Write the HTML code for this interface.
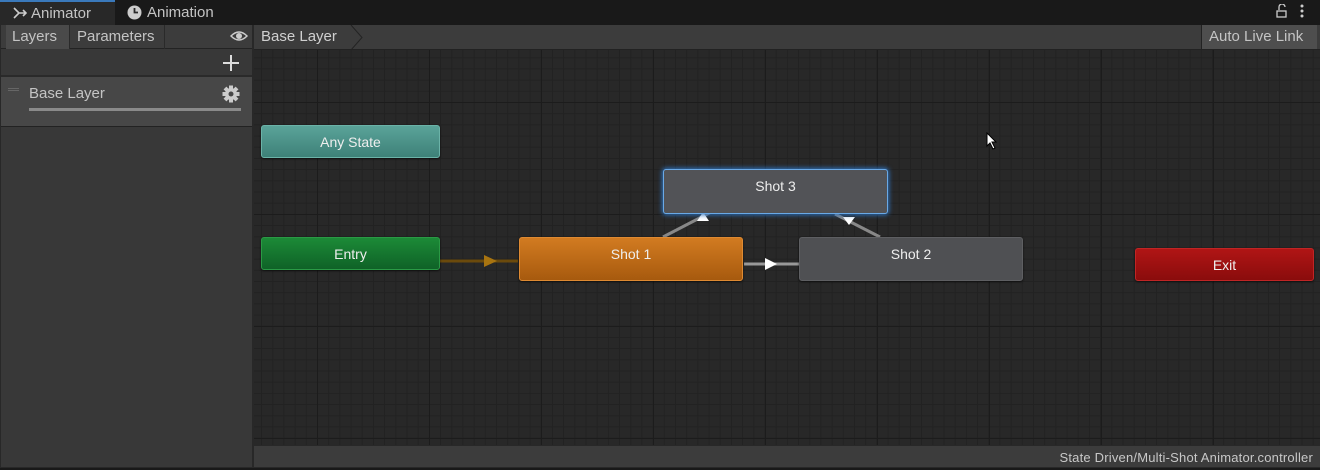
<!DOCTYPE html><html><head><style>
*{margin:0;padding:0;box-sizing:border-box}
body{width:1320px;height:470px;background:#191919;font-family:"Liberation Sans",sans-serif;position:relative;overflow:hidden;color:#c4c4c4}
.a{position:absolute}
.graph{left:254px;top:50px;width:1066px;height:395px;background-color:#282828;
background-image:linear-gradient(90deg,#1c1c1c 1px,transparent 1px),linear-gradient(#1c1c1c 1px,transparent 1px),linear-gradient(90deg,#222 1px,transparent 1px),linear-gradient(#222 1px,transparent 1px);
background-size:112px 112px,112px 112px,11.2px 11.2px,11.2px 11.2px;background-position:63px 52px,63px 52px,63px 52px,63px 52px}
.node{position:absolute;height:33px;border-radius:3px;font-size:14px;display:flex;justify-content:center;padding-top:8px;color:#eee;box-shadow:0 1px 2px rgba(0,0,0,.6)}
</style></head><body>
<div class="a" style="left:0;top:0;width:115px;height:25px;background:#282828;border-top:2px solid #3a79bb;font-size:15px;padding:3px 0 0 31px">Animator</div>
<svg class="a" style="left:13px;top:7px" width="14" height="12"><path d="M1 1 L6 6 L1 11 M6 6 L13 6 M10 3 L13 6 L10 9" fill="none" stroke="#ccc" stroke-width="1.6"/></svg>
<svg class="a" style="left:127px;top:5px" width="15" height="15"><circle cx="7.5" cy="7.5" r="7" fill="#ccc"/><path d="M7.5 3 V7.5 H11" stroke="#282828" stroke-width="1.8" fill="none"/></svg>
<div class="a" style="left:147px;top:4px;font-size:15px">Animation</div>
<svg class="a" style="left:1276px;top:4px" width="12" height="14"><path d="M3 6 V3 a3 3 0 0 1 6 0" fill="none" stroke="#ccc" stroke-width="1.3"/><rect x="1" y="7" width="9" height="6" fill="none" stroke="#ccc" stroke-width="1.3"/></svg>
<svg class="a" style="left:1299px;top:3px" width="6" height="16"><circle cx="3" cy="3" r="1.5" fill="#ccc"/><circle cx="3" cy="8" r="1.5" fill="#ccc"/><circle cx="3" cy="13" r="1.5" fill="#ccc"/></svg>
<div class="a" style="left:0;top:25px;width:1320px;height:443px;background:#282828"></div>
<!-- left panel -->
<div class="a" style="left:1px;top:25px;width:251px;height:442px;background:#383838"></div>
<div class="a" style="left:1px;top:25px;width:251px;height:24px;background:#3c3c3c;border-bottom:1px solid #232323"></div>
<div class="a" style="left:6px;top:25px;width:63px;height:24px;background:#4a4a4a;font-size:15px;padding:3px 0 0 6px">Layers</div>
<div class="a" style="left:69px;top:25px;width:96px;height:24px;border-left:1px solid #2a2a2a;border-right:1px solid #2a2a2a;font-size:15px;padding:3px 0 0 7px">Parameters</div>
<svg class="a" style="left:230px;top:30px" width="18" height="12"><path d="M1 6 Q9 -2 17 6 Q9 14 1 6Z" fill="none" stroke="#ccc" stroke-width="1.5"/><circle cx="9" cy="6" r="3" fill="#ccc"/></svg>
<svg class="a" style="left:223px;top:55px" width="16" height="16"><path d="M8 0 V16 M0 8 H16" stroke="#ddd" stroke-width="2"/></svg>
<div class="a" style="left:1px;top:75px;width:251px;height:2px;background:#2a2a2a"></div>
<div class="a" style="left:1px;top:77px;width:251px;height:50px;background:#474747;border-bottom:1px solid #222"></div>
<div class="a" style="left:8px;top:88px;width:11px;height:3px;border-top:1px solid #666;border-bottom:1px solid #666"></div>
<div class="a" style="left:29px;top:85px;font-size:15px">Base Layer</div>
<svg class="a" style="left:222px;top:85px" width="18" height="18" viewBox="0 0 18 18"><g fill="#ccc"><circle cx="9" cy="9" r="6"/><rect x="7" y="0.5" width="4" height="17"/><rect x="0.5" y="7" width="17" height="4"/><rect x="7" y="0.5" width="4" height="17" transform="rotate(45 9 9)"/><rect x="7" y="0.5" width="4" height="17" transform="rotate(-45 9 9)"/></g><circle cx="9" cy="9" r="2.5" fill="#474747"/></svg>
<div class="a" style="left:29px;top:108px;width:212px;height:3px;background:#8a8a8a"></div>
<!-- breadcrumb -->
<div class="a" style="left:254px;top:25px;width:1066px;height:25px;background:#3c3c3c;border-bottom:1px solid #222"></div>
<div class="a" style="left:261px;top:28px;font-size:15px;color:#d0d0d0">Base Layer</div>
<svg class="a" style="left:350px;top:25px" width="14" height="25"><path d="M1 0 L12 12.5 L1 25" fill="none" stroke="#232323"/></svg>
<div class="a" style="left:1201px;top:25px;width:116px;height:24px;background:#4e4e4e;border-left:1px solid #222;font-size:15px;padding:3px 0 0 7px">Auto Live Link</div>
<div class="graph a"></div>
<svg class="a" style="left:0;top:0" width="1320" height="470">
<line x1="440" y1="261" x2="518" y2="261" stroke="#6b4a0c" stroke-width="3"/>
<polygon points="484,255 497,261 484,267" fill="#a87410"/>
<line x1="744" y1="264" x2="799" y2="264" stroke="#999" stroke-width="3"/>
<polygon points="765,258 777,264 765,270" fill="#fff"/>
<line x1="663" y1="237" x2="715" y2="210" stroke="#888" stroke-width="3"/>
<polygon points="697,221 703,212 709,221" fill="#fff"/>
<line x1="880" y1="237" x2="835" y2="214" stroke="#888" stroke-width="3"/>
<polygon points="843,217 855,217 849,225" fill="#fff"/>
</svg>
<div class="node" style="left:261px;top:125px;width:179px;background:linear-gradient(#5aa399,#3e8178);border:1px solid #6bb3a8">Any State</div>
<div class="node" style="left:261px;top:237px;width:179px;background:linear-gradient(#1c8a37,#0f6227);border:1px solid #2a9a45">Entry</div>
<div class="node" style="left:519px;top:237px;width:224px;height:44px;background:linear-gradient(#d27b21,#a75a0e);border:1px solid #de8a32">Shot 1</div>
<div class="node" style="left:799px;top:237px;width:224px;height:44px;background:#4f5053;border:1px solid #5e5f62">Shot 2</div>
<div class="node" style="left:663px;top:169px;width:225px;height:45px;background:#525357;border:1px solid #6aa9e6;box-shadow:0 0 5px 1px #2f74c0">Shot 3</div>
<div class="node" style="left:1135px;top:248px;width:179px;background:linear-gradient(#b01515,#8a0c0c);border:1px solid #c02525">Exit</div>
<svg class="a" style="left:986px;top:132px" width="12" height="18"><path d="M1 1 L1 14 L4 11 L7 17 L9 16 L6 10 L10 10 Z" fill="#fff" stroke="#000" stroke-width="1"/></svg>
<div class="a" style="left:254px;top:446px;width:1066px;height:21px;background:#3c3c3c;font-size:13px;text-align:right;padding:4px 7px 0 0;color:#c8c8c8;letter-spacing:.2px">State Driven/Multi-Shot Animator.controller</div>
</body></html>
